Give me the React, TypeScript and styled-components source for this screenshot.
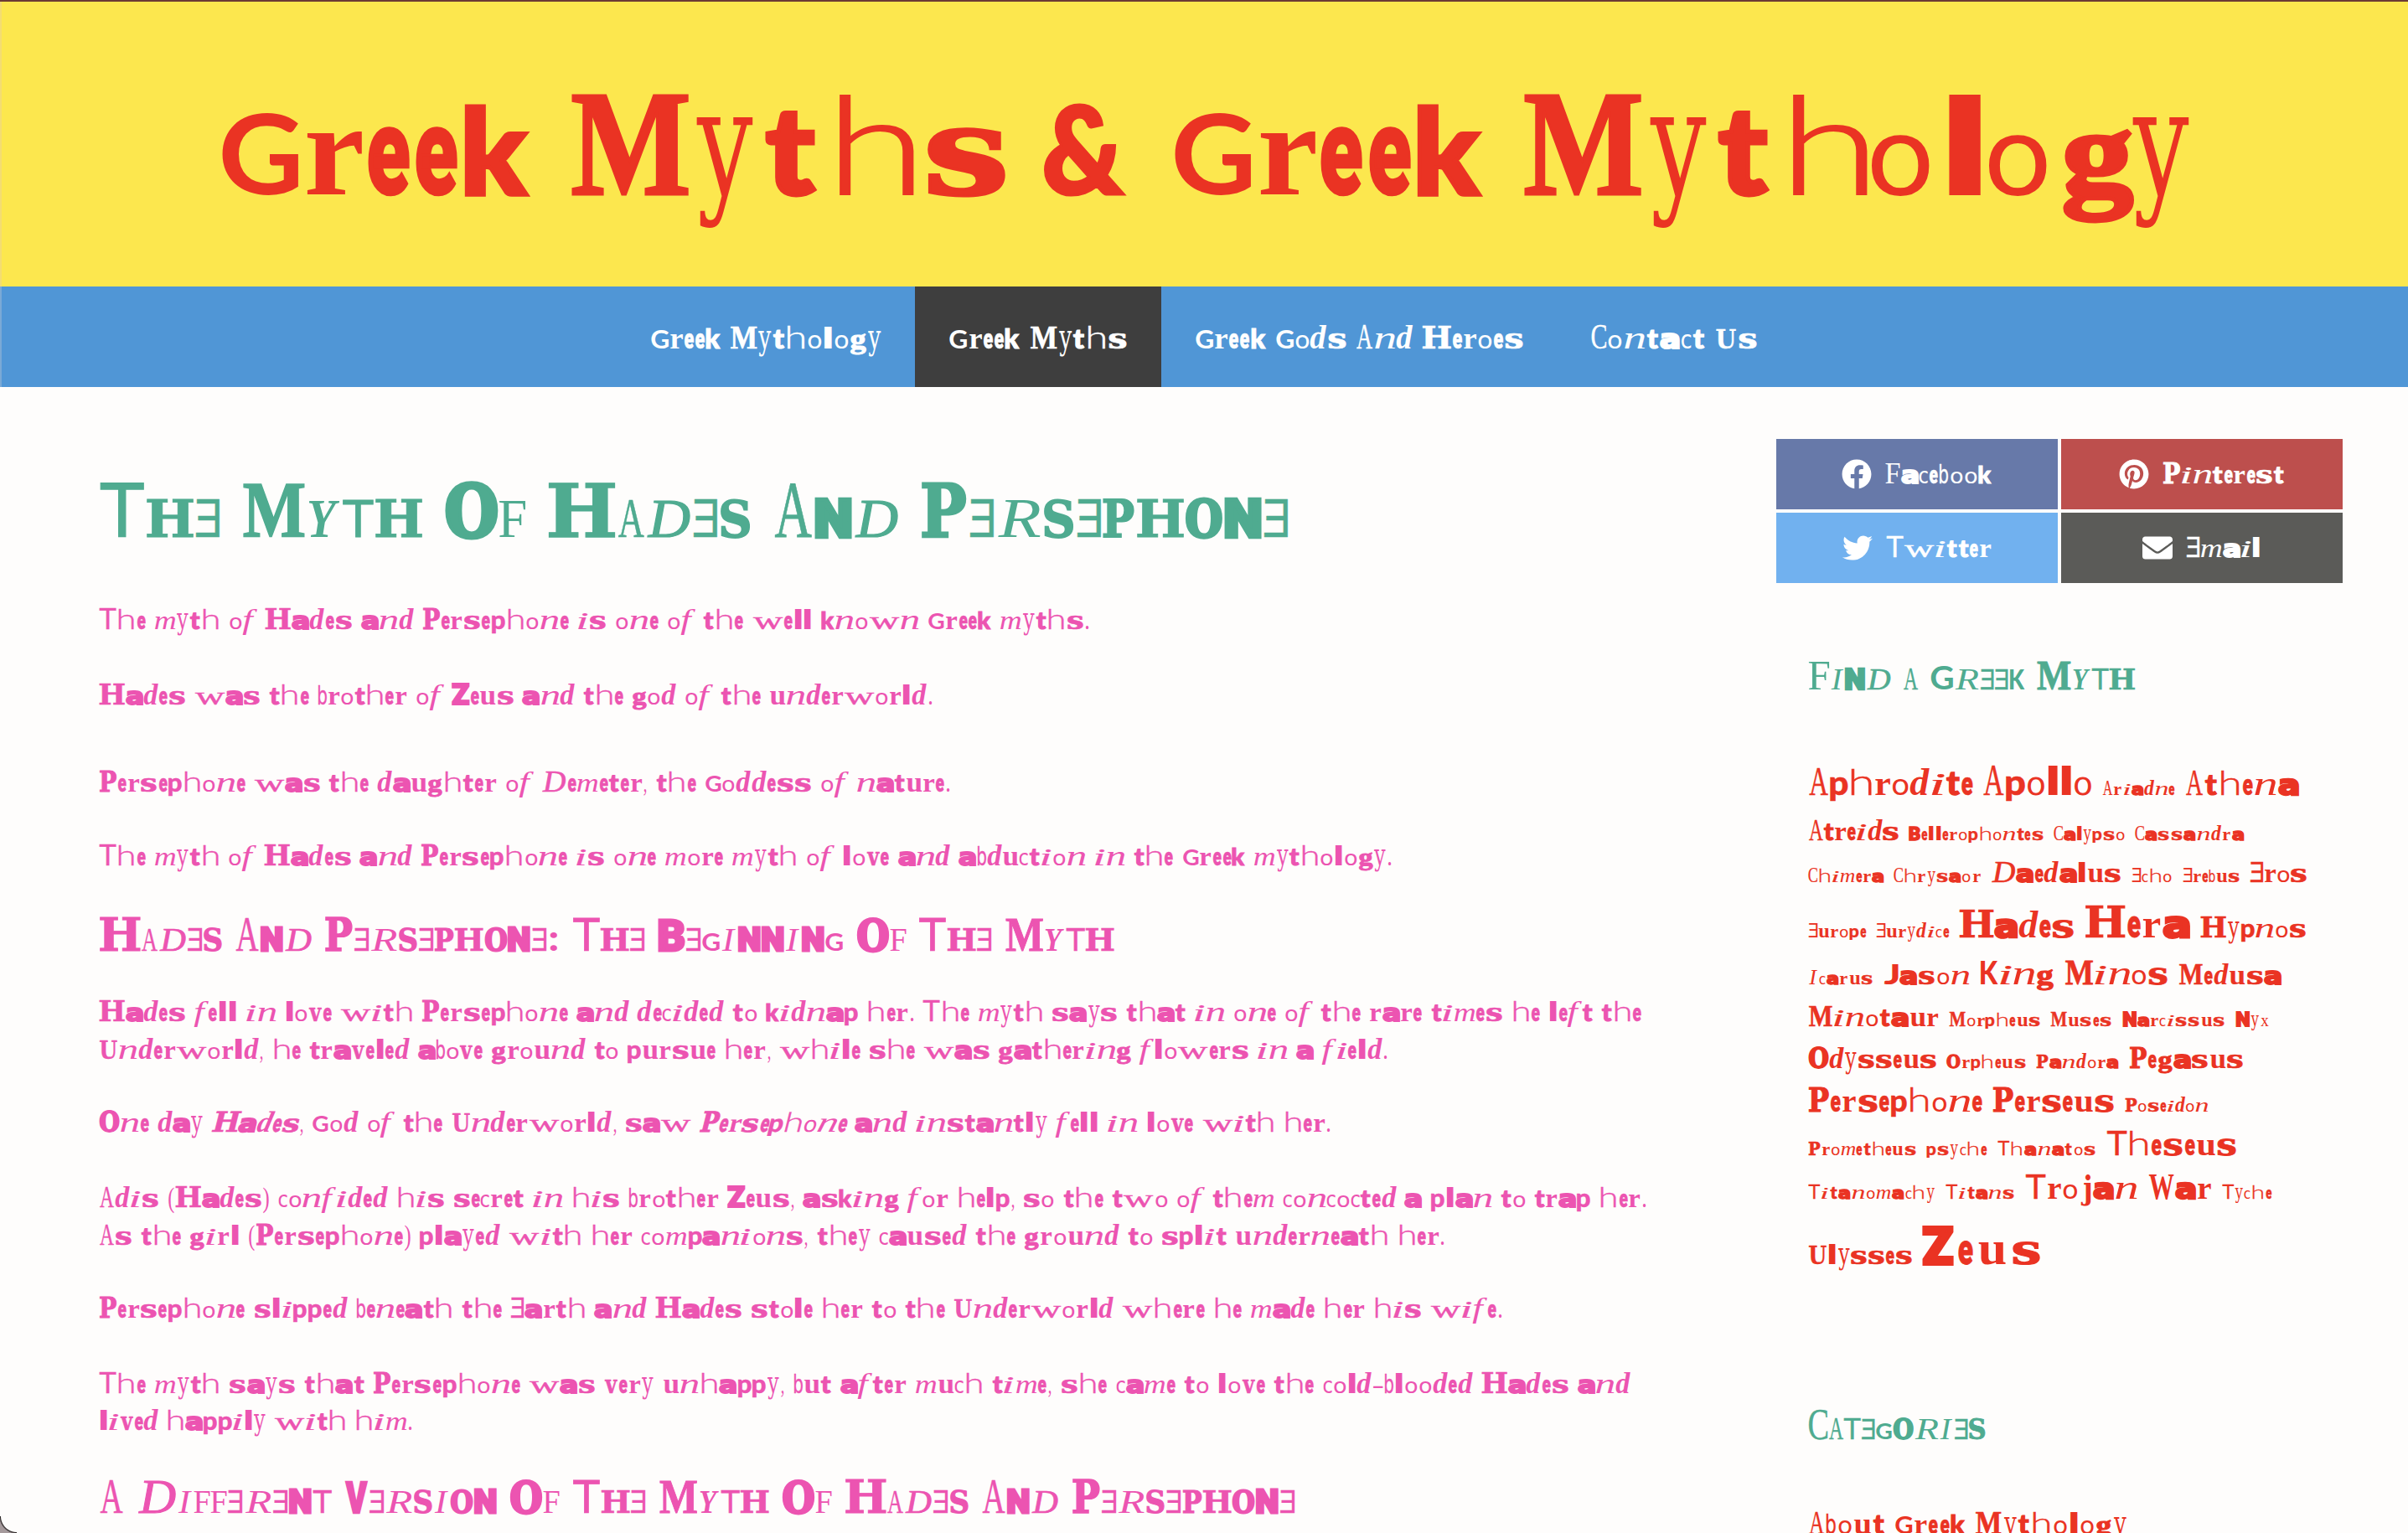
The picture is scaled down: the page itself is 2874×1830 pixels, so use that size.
import React from "react";
import styled, { createGlobalStyle } from "styled-components";
import { FaFacebook, FaPinterest, FaTwitter, FaEnvelope } from "react-icons/fa";

const SERIF = '"Liberation Serif", serif';
const SLAB = '"DejaVu Serif", serif';
const SANS = '"Liberation Sans", sans-serif';
const ROUND = "Lato, sans-serif";
const BLOCK = "Roboto, sans-serif";
const WIDE = '"DejaVu Sans", sans-serif';
const MONO = '"DejaVu Sans Mono", monospace';

/* family, css style and weight, advance, ink width, ink height, stroke, flip; lengths in em */
type Spec = [string, string, number, number, number, number?, boolean?];

const LETTERS: Record<string, Spec> = {
  a: [WIDE, "700", 0.66, 0.59, 0.5, 0.06],
  b: [WIDE, "400", 0.37, 0.31, 0.7, 0.01],
  c: [MONO, "400", 0.36, 0.31, 0.47],
  d: [SERIF, "italic 700", 0.57, 0.54, 0.76],
  e: [BLOCK, "900", 0.36, 0.3, 0.495, 0.015],
  f: [SERIF, "italic 400", 0.52, 0.54, 0.72],
  g: [SERIF, "700", 0.58, 0.5, 0.47, 0.03],
  h: [ROUND, "300", 0.72, 0.54, 0.735, 0.012],
  i: [SERIF, "italic 400", 0.43, 0.34, 0.6, 0.005],
  j: [SLAB, "700", 0.4, 0.3, 0.76],
  k: [ROUND, "900", 0.51, 0.45, 0.6625, 0.03],
  l: [BLOCK, "900", 0.36, 0.24, 0.75],
  m: [SERIF, "italic 400", 0.82, 0.76, 0.48],
  n: [SERIF, "italic 400", 0.73, 0.66, 0.5],
  o: [WIDE, "400", 0.52, 0.43, 0.445],
  p: [ROUND, "900", 0.55, 0.48, 0.49, 0.01],
  q: [ROUND, "900", 0.55, 0.48, 0.49],
  r: [SERIF, "700", 0.478, 0.41, 0.47],
  s: [SLAB, "700", 0.66, 0.56, 0.49, 0.02],
  t: [ROUND, "900", 0.42, 0.35, 0.61, 0.03],
  u: [SERIF, "700", 0.63, 0.57, 0.47],
  v: [SLAB, "700", 0.52, 0.46, 0.48, 0.02],
  w: [SERIF, "400", 1.16, 1.1, 0.42, 0.01],
  x: [SERIF, "400", 0.46, 0.42, 0.46],
  y: [SLAB, "400", 0.487, 0.42, 0.58],
  z: [BLOCK, "900", 0.5, 0.46, 0.48],
  A: [SERIF, "400", 0.586, 0.52, 0.75, 0.01],
  B: [BLOCK, "900", 0.648, 0.57, 0.72, 0.06],
  C: [SERIF, "400", 0.52, 0.48, 0.76, 0.01],
  D: [SERIF, "italic 400", 0.95, 0.86, 0.74, 0.02],
  E: [SANS, "400", 0.54, 0.47, 0.76, 0.01, true],
  F: [SERIF, "400", 0.56, 0.53, 0.72],
  G: [ROUND, "700", 0.64, 0.57, 0.6],
  H: [SLAB, "700", 0.985, 0.93, 0.76, 0.015],
  I: [SERIF, "italic 400", 0.553, 0.45, 0.74],
  J: [ROUND, "900", 0.58, 0.52, 0.74],
  K: [ROUND, "900", 0.6, 0.54, 0.74],
  M: [SERIF, "700", 0.93, 0.86, 0.735, 0.02],
  N: [BLOCK, "900", 0.797, 0.67, 0.76, 0.08],
  O: [SLAB, "700", 0.78, 0.7, 0.77, 0.06],
  P: [SLAB, "700", 0.683, 0.61, 0.76, 0.03],
  R: [SERIF, "italic 400", 0.96, 0.86, 0.74],
  S: [SLAB, "700", 0.667, 0.57, 0.76, 0.03],
  T: [WIDE, "400", 0.66, 0.61, 0.76, 0.015],
  U: [SLAB, "700", 0.72, 0.65, 0.66, 0.01],
  V: [BLOCK, "900", 0.56, 0.49, 0.72, 0.05],
  W: [SERIF, "700", 0.82, 0.78, 0.76],
  Y: [SERIF, "italic 700", 0.72, 0.62, 0.72],
  Z: [BLOCK, "900", 0.68, 0.6, 0.78, 0.07],
  "&": [ROUND, "900", 0.68, 0.59, 0.6625, 0.02],
  ".": [BLOCK, "900", 0.22, 0.1, 0.12],
  ",": [SERIF, "400", 0.18, 0.09, 0.1],
  ":": [BLOCK, "900", 0.3, 0.16, 0.45],
  "(": [SERIF, "400", 0.28, 0.2, 0.74],
  ")": [SERIF, "400", 0.28, 0.2, 0.74],
  "-": [SERIF, "400", 0.42, 0.36, 0.26],
};
const SPACE = 0.29;
const SMALL = 0.7;

type Fit = { family: string; style: string; size: number; scale: number; shift: number; adv: number; stroke: number };

const pen = document.createElement("canvas").getContext("2d")!;
const cache: Record<string, Fit> = {};

/* Scales a stock glyph so that its ink fills the box listed for the letter. */
function fitLetter(ch: string): Fit {
  if (cache[ch]) return cache[ch];
  const [family, style, adv, ink, top, stroke = 0, flip = false] = LETTERS[ch];
  pen.font = `${style} 200px ${family}`;
  const m = pen.measureText(ch);
  const start = -m.actualBoundingBoxLeft / 200;
  const width = (m.actualBoundingBoxRight + m.actualBoundingBoxLeft) / 200;
  const size = top / (m.actualBoundingBoxAscent / 200);
  const scale = ink / (width * size);
  const side = (adv - ink) / 2;
  const bearing = start * size * scale;
  cache[ch] = {
    family,
    style,
    size,
    adv,
    stroke,
    scale: flip ? -scale : scale,
    shift: flip ? side + ink + bearing : side - bearing,
  };
  return cache[ch];
}

const Glyph = styled.span<{ $fit: Fit; $small: boolean; $slant: boolean }>`
  display: inline-block;
  white-space: pre;
  margin-right: var(--track);
  text-transform: ${(p) => (p.$small ? "uppercase" : "none")};
  font: ${(p) => p.$fit.style} ${(p) => (p.$fit.size * (p.$small ? SMALL : 1)).toFixed(4)}em/0.8 ${(p) => p.$fit.family};
  width: ${(p) => (p.$fit.adv / p.$fit.size).toFixed(4)}em;
  -webkit-text-stroke: ${(p) => (p.$fit.stroke / p.$fit.size).toFixed(4)}em currentColor;
  transform-origin: 0 75%;
  transform: translateX(${(p) => (p.$fit.shift / p.$fit.size).toFixed(4)}em)
    ${(p) => (p.$slant ? "skewX(-14deg)" : "")}
    scaleX(${(p) => p.$fit.scale.toFixed(4)});
`;

const Run = styled.span<{ $track: number }>`
  --track: ${(p) => p.$track.toFixed(3)}px;
  white-space: nowrap;
`;

const Gap = styled.span`
  display: inline-block;
  white-space: pre;
  width: ${SPACE}em;
  margin-right: var(--track);
`;

function Lettering({ text, size, width, caps = false }: { text: string; size: number; width: number; caps?: boolean }) {
  let slant = false;
  let total = 0;
  let count = 0;
  const parts: React.ReactNode[] = [];
  Array.from(text).forEach((ch, i) => {
    if (ch === "*") {
      slant = !slant;
      return;
    }
    count += 1;
    if (ch === " ") {
      total += SPACE * size;
      parts.push(<Gap key={i}> </Gap>);
      return;
    }
    const small = caps && ch >= "a" && ch <= "z";
    const fit = fitLetter(small ? ch.toUpperCase() : ch);
    total += fit.adv * size * (small ? SMALL : 1);
    parts.push(
      <Glyph key={i} $fit={fit} $small={small} $slant={slant}>
        {ch}
      </Glyph>
    );
  });
  return <Run $track={(width - total) / count}>{parts}</Run>;
}

const Global = createGlobalStyle`
  html, body { margin: 0; background: #fefdfc; }
  body { font-family: "Liberation Sans", Arial, sans-serif; }
`;

const Page = styled.div`
  position: relative;
  height: 1830px;
  overflow: hidden;
  background: #fefdfc;
`;

const Banner = styled.header`
  box-sizing: border-box;
  height: 342px;
  border-top: 2px solid #6b3a34;
  padding-top: 77px;
  background: #fce74e;
  box-shadow: inset 2px 0 #f3dc72;
  text-align: center;
`;

const SiteTitle = styled.h1`
  margin: 0;
  font-size: 160px;
  font-weight: 400;
  line-height: 195px;
  color: #ea3323;
`;

const Nav = styled.nav`
  display: flex;
  justify-content: center;
  height: 120px;
  background: #5096d6;
  box-shadow: inset 2px 0 #7aa9d6;
`;

const NavItem = styled.a<{ $active?: boolean }>`
  padding: 0 40px;
  font-size: 36px;
  line-height: 124px;
  color: #fff;
  background: ${(p) => (p.$active ? "#3e3e3e" : "transparent")};
`;

const Columns = styled.div`
  display: flex;
  justify-content: space-between;
  padding: 0 78px 0 118px;
`;

const Article = styled.main`
  width: 1900px;
  padding-top: 100px;
  color: #ec54b1;
`;

const PageTitle = styled.h2`
  margin: 0;
  font-size: 84px;
  font-weight: 400;
  line-height: 100px;
  color: #4fab90;
`;

const Subhead = styled.h3<{ $before: number }>`
  margin: ${(p) => p.$before}px 0 0;
  font-size: 51.2px;
  font-weight: 400;
  line-height: 60px;
`;

const Paragraph = styled.p<{ $before: number }>`
  margin: ${(p) => p.$before}px 0 0;
  font-size: 32px;
  line-height: 44.8px;
`;

const Line = styled.span`
  display: block;
`;

const Sidebar = styled.aside`
  width: 676px;
  padding-top: 62px;
  color: #ea3323;
`;

const ShareGrid = styled.div`
  display: grid;
  grid-template-columns: 1fr 1fr;
  gap: 4px;
`;

const Share = styled.a<{ $color: string }>`
  display: flex;
  align-items: center;
  justify-content: center;
  gap: 16px;
  height: 84px;
  font-size: 32px;
  line-height: 84px;
  color: #fff;
  background: ${(p) => p.$color};

  svg {
    width: 36px;
    height: 36px;
  }
`;

const Widget = styled.section<{ $before: number }>`
  padding: ${(p) => p.$before}px 0 0 38px;
`;

const WidgetTitle = styled.h3`
  margin: 0;
  font-size: 46px;
  font-weight: 400;
  line-height: 56px;
  color: #4fab90;
`;

const TagRow = styled.div<{ $before: number }>`
  display: flex;
  align-items: baseline;
  gap: 11px;
  margin-top: ${(p) => p.$before}px;
`;

const Tag = styled.a<{ $size: number }>`
  font-size: ${(p) => p.$size}px;
  line-height: 1;
`;

const Category = styled.a`
  display: block;
  margin-top: 64px;
  font-size: 35px;
  line-height: 49px;
`;

const Corner = styled.div`
  position: absolute;
  left: 0;
  bottom: 0;
  width: 20px;
  height: 20px;
  background: radial-gradient(circle at 20px 0, transparent 18.5px, #2c2727 19.5px, #a59a9c 21px);
`;

const NAV: [string, number, boolean?][] = [
  ["Greek Mythology", 277],
  ["Greek Myths", 214, true],
  ["Greek Gods And Heroes", 393],
  ["Contact Us", 200],
];

type Block = { kind: "p" | "h"; before: number; lines: [string, number][] };

const STORY: Block[] = [
  { kind: "p", before: 56, lines: [["The myth of Hades and Persephone is one of the well known Greek myths.", 1184]] },
  { kind: "p", before: 45.5, lines: [["Hades was the brother of Zeus and the god of the underworld.", 997]] },
  { kind: "p", before: 59.2, lines: [["Persephone was the daughter of Demeter, the Goddess of nature.", 1018]] },
  { kind: "p", before: 42.7, lines: [["The myth of Hades and Persephone is one more myth of love and abduction in the Greek mythology.", 1546]] },
  { kind: "h", before: 43.5, lines: [["Hades And Persephone: The Beginning Of The Myth", 1212]] },
  {
    kind: "p",
    before: 38.2,
    lines: [
      ["Hades fell in love with Persephone and decided to kidnap her. The myth says that in one of the rare times he left the", 1844],
      ["Underworld, he traveled above ground to pursue her, while she was gathering flowers in a field.", 1540],
    ],
  },
  { kind: "p", before: 42.4, lines: [["One day *Hades*, God of the Underworld, saw *Persephone* and instantly fell in love with her.", 1473]] },
  {
    kind: "p",
    before: 45.2,
    lines: [
      ["Adis (Hades) confided his secret in his brother Zeus, asking for help, so the two of them concocted a plan to trap her.", 1850],
      ["As the girl (Persephone) played with her companions, they caused the ground to split underneath her.", 1610],
    ],
  },
  { kind: "p", before: 42.4, lines: [["Persephone slipped beneath the Earth and Hades stole her to the Underworld where he made her his wife.", 1678]] },
  {
    kind: "p",
    before: 44.7,
    lines: [
      ["The myth says that Persephone was very unhappy, but after much time, she came to love the cold-blooded Hades and", 1830],
      ["lived happily with him.", 375],
    ],
  },
  { kind: "h", before: 40.2, lines: [["A Different Version Of The Myth Of Hades And Persephone", 1428]] },
];

type TagData = [string, number, number];
const TAGS: { before: number; tags: TagData[] }[] = [
  { before: 75, tags: [["Aphrodite", 43, 197], ["Apollo", 46, 132], ["Ariadne", 22, 88], ["Athena", 38, 137]] },
  { before: 20.1, tags: [["Atreids", 32, 109], ["Bellerophontes", 22, 162], ["Calypso", 22, 86], ["Cassandra", 22, 132]] },
  { before: 17.7, tags: [["Chimera", 22, 91], ["Chrysaor", 22, 105], ["Daedalus", 32, 157], ["Echo", 22, 50], ["Erebus", 22, 70], ["Eros", 32, 68]] },
  { before: 18.9, tags: [["Europe", 22, 70], ["Eurydice", 22, 88], ["Hades", 43, 139], ["Hera", 50, 127], ["Hypnos", 32, 128]] },
  { before: 16.6, tags: [["Icarus", 22, 79], ["Jason", 32, 104], ["King Minos", 38, 226], ["Medusa", 32, 124]] },
  { before: 17.1, tags: [["Minotaur", 32, 157], ["Morpheus", 22, 110], ["Muses", 22, 75], ["Narcissus", 22, 124], ["Nyx", 22, 42]] },
  { before: 18, tags: [["Odysseus", 32, 154], ["Orpheus", 22, 96], ["Pandora", 22, 100], ["Pegasus", 32, 138]] },
  { before: 14.8, tags: [["Persephone", 38, 209], ["Perseus", 38, 147], ["Poseidon", 22, 101]] },
  { before: 13.8, tags: [["Prometheus", 22, 130], ["psyche", 22, 74], ["Thanatos", 22, 119], ["Theseus", 38, 157]] },
  { before: 13.7, tags: [["Titanomachy", 22, 153], ["Titans", 22, 84], ["Trojan War", 38, 224], ["Tyche", 22, 61]] },
  { before: 25.4, tags: [["Ulysses", 32, 125], ["Zeus", 56, 147]] },
];

const SHARES: [string, string, number, React.ReactNode][] = [
  ["Facebook", "#6779a9", 128, <FaFacebook key="f" />],
  ["Pinterest", "#bd4f4d", 146, <FaPinterest key="p" />],
  ["Twitter", "#71b1ef", 127, <FaTwitter key="t" />],
  ["Email", "#5b5b58", 90, <FaEnvelope key="e" />],
];

export default function App() {
  return (
    <Page>
      <Global />
      <Banner>
        <SiteTitle>
          <Lettering text="Greek Myths & Greek Mythology" size={160} width={2362} />
        </SiteTitle>
      </Banner>
      <Nav>
        {NAV.map(([label, width, active]) => (
          <NavItem key={label} $active={active}>
            <Lettering text={label} size={36} width={width} />
          </NavItem>
        ))}
      </Nav>
      <Columns>
        <Article>
          <PageTitle>
            <Lettering text="The Myth Of Hades And Persephone" size={84} width={1421} caps />
          </PageTitle>
          {STORY.map((block, i) =>
            block.kind === "h" ? (
              <Subhead key={i} $before={block.before}>
                <Lettering text={block.lines[0][0]} size={51.2} width={block.lines[0][1]} caps />
              </Subhead>
            ) : (
              <Paragraph key={i} $before={block.before}>
                {block.lines.map(([text, width]) => (
                  <Line key={text}>
                    <Lettering text={text} size={32} width={width} />
                  </Line>
                ))}
              </Paragraph>
            )
          )}
        </Article>
        <Sidebar>
          <ShareGrid>
            {SHARES.map(([label, color, width, icon]) => (
              <Share key={label} $color={color}>
                {icon}
                <Lettering text={label} size={32} width={width} />
              </Share>
            ))}
          </ShareGrid>
          <Widget $before={83}>
            <WidgetTitle>
              <Lettering text="Find a Greek Myth" size={46} width={391} caps />
            </WidgetTitle>
            {TAGS.map((row) => (
              <TagRow key={row.tags[0][0]} $before={row.before}>
                {row.tags.map(([name, size, width]) => (
                  <Tag key={name} $size={size}>
                    <Lettering text={name} size={size} width={width} />
                  </Tag>
                ))}
              </TagRow>
            ))}
          </Widget>
          <Widget $before={156}>
            <WidgetTitle>
              <Lettering text="Categories" size={46} width={212} caps />
            </WidgetTitle>
            <Category>
              <Lettering text="About Greek Mythology" size={35} width={382} />
            </Category>
          </Widget>
        </Sidebar>
      </Columns>
      <Corner />
    </Page>
  );
}
